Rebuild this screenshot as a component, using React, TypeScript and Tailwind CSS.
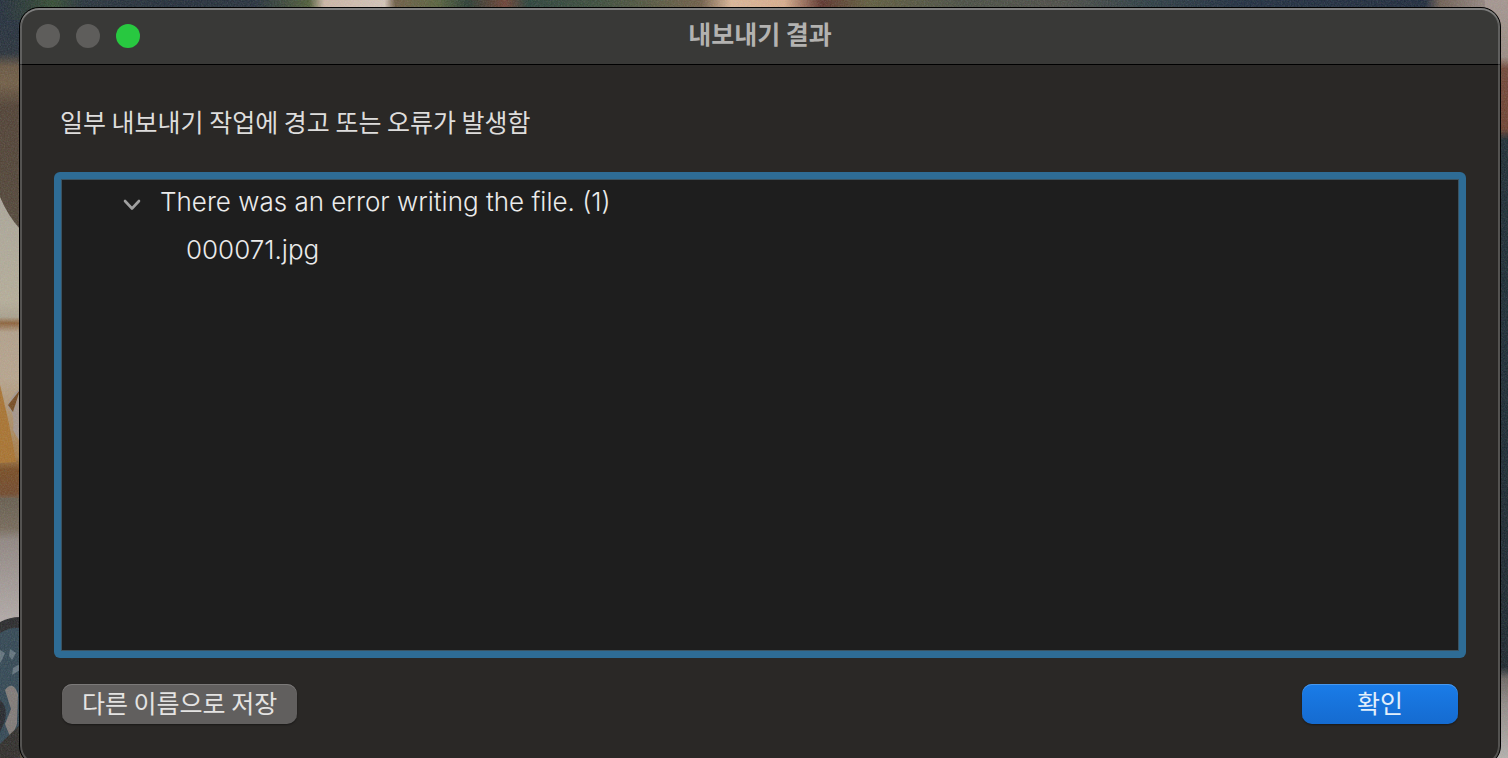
import { useState } from 'react';

const failures = [
  { message: 'There was an error writing the file.', files: ['000071.jpg'] },
];

function Wallpaper() {
  return (
    <svg
      className="absolute inset-0 -z-10 h-full w-full"
      viewBox="0 0 1508 758"
      preserveAspectRatio="none"
      aria-hidden="true"
    >
      <defs>
        <linearGradient id="top" x1="0" x2="1508" y1="0" y2="0" gradientUnits="userSpaceOnUse">
          <stop offset="0" stopColor="#1f2a38" />
          <stop offset="0.02" stopColor="#26372f" />
          <stop offset="0.035" stopColor="#31492f" />
          <stop offset="0.055" stopColor="#232f38" />
          <stop offset="0.12" stopColor="#1f2936" />
          <stop offset="0.17" stopColor="#222d38" />
          <stop offset="0.205" stopColor="#4c5a35" />
          <stop offset="0.215" stopColor="#cdb6a5" />
          <stop offset="0.255" stopColor="#d3c4b8" />
          <stop offset="0.262" stopColor="#6c5a42" />
          <stop offset="0.29" stopColor="#56603a" />
          <stop offset="0.31" stopColor="#26392f" />
          <stop offset="0.335" stopColor="#6b3e31" />
          <stop offset="0.35" stopColor="#283f37" />
          <stop offset="0.4" stopColor="#3a4a38" />
          <stop offset="0.44" stopColor="#5a573f" />
          <stop offset="0.465" stopColor="#6e5c45" />
          <stop offset="0.485" stopColor="#dcb697" />
          <stop offset="0.52" stopColor="#d9ad8c" />
          <stop offset="0.545" stopColor="#5a3028" />
          <stop offset="0.575" stopColor="#5e5a3b" />
          <stop offset="0.64" stopColor="#464b40" />
          <stop offset="0.7" stopColor="#4a4a43" />
          <stop offset="0.76" stopColor="#2a3a40" />
          <stop offset="0.82" stopColor="#1c2a3c" />
          <stop offset="0.945" stopColor="#1a2638" />
          <stop offset="0.955" stopColor="#6c5c50" />
          <stop offset="0.98" stopColor="#8d7f79" />
          <stop offset="1" stopColor="#a0908b" />
        </linearGradient>
        <linearGradient id="left" x1="0" x2="0" y1="0" y2="758" gradientUnits="userSpaceOnUse">
          <stop offset="0.025" stopColor="#1f2b39" />
          <stop offset="0.07" stopColor="#242d36" />
          <stop offset="0.088" stopColor="#67543f" />
          <stop offset="0.11" stopColor="#6f5b42" />
          <stop offset="0.14" stopColor="#4d3d30" />
          <stop offset="0.3" stopColor="#4f4335" />
        </linearGradient>
        <linearGradient id="shell" x1="0" x2="0" y1="195" y2="500" gradientUnits="userSpaceOnUse">
          <stop offset="0" stopColor="#aaa598" />
          <stop offset="0.35" stopColor="#b5ad98" />
          <stop offset="0.4" stopColor="#a9a08c" />
          <stop offset="0.42" stopColor="#8b5f36" />
          <stop offset="0.45" stopColor="#b2a08a" />
          <stop offset="0.6" stopColor="#b7a48c" />
          <stop offset="0.86" stopColor="#a47a46" />
          <stop offset="0.9" stopColor="#76491f" />
          <stop offset="0.98" stopColor="#6f4628" />
          <stop offset="1" stopColor="#6d6251" />
        </linearGradient>
        <linearGradient id="cloth" x1="0" x2="0" y1="498" y2="618" gradientUnits="userSpaceOnUse">
          <stop offset="0" stopColor="#635a4b" />
          <stop offset="0.25" stopColor="#746757" />
          <stop offset="0.35" stopColor="#8f8580" />
          <stop offset="1" stopColor="#b0a8a5" />
        </linearGradient>
        <linearGradient id="right" x1="0" x2="0" y1="0" y2="758" gradientUnits="userSpaceOnUse">
          <stop offset="0" stopColor="#a4958f" />
          <stop offset="0.075" stopColor="#998b82" />
          <stop offset="0.09" stopColor="#704536" />
          <stop offset="0.17" stopColor="#6d3e2d" />
          <stop offset="0.185" stopColor="#192830" />
          <stop offset="0.5" stopColor="#17262f" />
          <stop offset="0.88" stopColor="#172229" />
          <stop offset="0.895" stopColor="#6a6561" />
          <stop offset="0.93" stopColor="#918a86" />
          <stop offset="1" stopColor="#b3afac" />
        </linearGradient>
        <filter id="grain" x="0" y="0" width="100%" height="100%">
          <feTurbulence type="fractalNoise" baseFrequency="0.7" numOctaves="2" seed="4" />
        </filter>
      </defs>
      <rect width="1508" height="40" fill="url(#top)" />
      <rect y="20" width="40" height="738" fill="url(#left)" />
      <path d="M0 197Q8 216 20 229V500H0Z" fill="url(#shell)" />
      <path d="M20 388Q7 400 8 408Q15 412 13 430L20 442Z" fill="#a4958a" />
      <path d="M20 390L8 405L13 412Z" fill="#74491f" />
      <path d="M0 385Q10 425 16 462L0 463Z" fill="#a8712c" />
      <rect y="498" width="30" height="130" fill="url(#cloth)" />
      <path d="M0 622Q10 617 20 617V758H0Z" fill="#252527" />
      <path d="M0 633Q10 627 20 628V758H0Z" fill="#2e4350" />
      <path d="M5 690Q13 680 18 694L17 724L11 739L5 724L11 709Z" fill="#7e7875" />
      <path d="M0 650l5 3-3 7-2 3zM10 649l6 4-4 7-3-4zM13 668l7-4v6l-8 5z" fill="#60717b" />
      <path d="M0 700Q9 708 4 723L0 732Z" fill="#202328" />
      <path d="M0 744Q10 734 20 725V758H0Z" fill="#2b2926" />
      <rect x="1485" width="23" height="758" fill="url(#right)" />
      <rect width="1508" height="758" filter="url(#grain)" opacity="0.22" />
    </svg>
  );
}

function FailureGroup({ message, files }: { message: string; files: string[] }) {
  const [open, setOpen] = useState(true);
  return (
    <li>
      <button
        type="button"
        aria-expanded={open}
        onClick={() => setOpen(!open)}
        className="flex h-12 items-center gap-[18px] pb-1"
      >
        <svg
          className={open ? 'mt-1 h-5 w-5' : 'mt-1 h-5 w-5 -rotate-90'}
          viewBox="0 0 20 20"
          fill="none"
          stroke="#a0a0a0"
          strokeWidth="2.6"
          strokeLinecap="round"
          strokeLinejoin="round"
          aria-hidden="true"
        >
          <path d="M3 7L10 14.5L17 7" />
        </svg>
        <span>
          {message} ({files.length})
        </span>
      </button>
      {open && (
        <ul className="pl-16">
          {files.map((file) => (
            <li key={file} className="flex h-12 items-center pb-1">
              {file}
            </li>
          ))}
        </ul>
      )}
    </li>
  );
}

export default function App() {
  return (
    <div className="relative isolate flex min-h-screen flex-col overflow-hidden pt-[7px] pr-[7px] pl-[19px] font-['Noto_Sans_CJK_KR',sans-serif] text-[25px] leading-9 text-[#dedddc]">
      <Wallpaper />
      <main className="relative -mb-2 flex grow flex-col overflow-hidden rounded-[20px] border border-black bg-[#2a2826]">
        <header className="grid h-[57px] shrink-0 grid-cols-[1fr_auto_1fr] items-center border-b border-black bg-[#393937] px-4">
          <div className="flex gap-4">
            <button type="button" aria-label="닫기" className="h-6 w-6 rounded-full bg-[#5e5d5b]" />
            <button type="button" aria-label="최소화" className="h-6 w-6 rounded-full bg-[#5e5d5b]" />
            <button type="button" aria-label="확대" className="h-6 w-6 rounded-full bg-[#28c840]" />
          </div>
          <h1 className="pb-1.5 font-bold text-[#b3b2b0]">내보내기 결과</h1>
        </header>
        <section className="flex grow flex-col px-[34px] pt-[38px] pb-[41px]">
          <p className="px-1.5">일부 내보내기 작업에 경고 또는 오류가 발생함</p>
          <div className="mt-[33px] flex grow rounded-md bg-[#2e6c95] p-[7px]">
            <ul className="grow border border-[#3b5361] bg-[#1e1e1e] pb-1 pl-[60px] font-['Inter',sans-serif] text-[26px] leading-8 font-light text-[#ebebeb]">
              {failures.map((failure) => (
                <FailureGroup key={failure.message} {...failure} />
              ))}
            </ul>
          </div>
          <footer className="mt-[26px] flex justify-between px-2">
            <button
              type="button"
              className="h-10 rounded-[10px] bg-[#615f5e] px-5 pb-1.5 text-[#e4e3e2] shadow-[inset_0_1px_0_#7b7978,0_1px_2px_#0006]"
            >
              다른 이름으로 저장
            </button>
            <button
              type="button"
              className="h-10 w-[156px] rounded-[10px] bg-linear-to-b from-[#1a7ce8] to-[#156bd0] pb-1.5 text-[#e3effb] shadow-[inset_0_1px_0_#4798ee,0_1px_2px_#0006]"
            >
              확인
            </button>
          </footer>
        </section>
        <div className="pointer-events-none absolute inset-0 rounded-[19px] shadow-[inset_0_0_0_2px_#ffffff33,inset_0_2px_0_#ffffff33]" />
      </main>
    </div>
  );
}
